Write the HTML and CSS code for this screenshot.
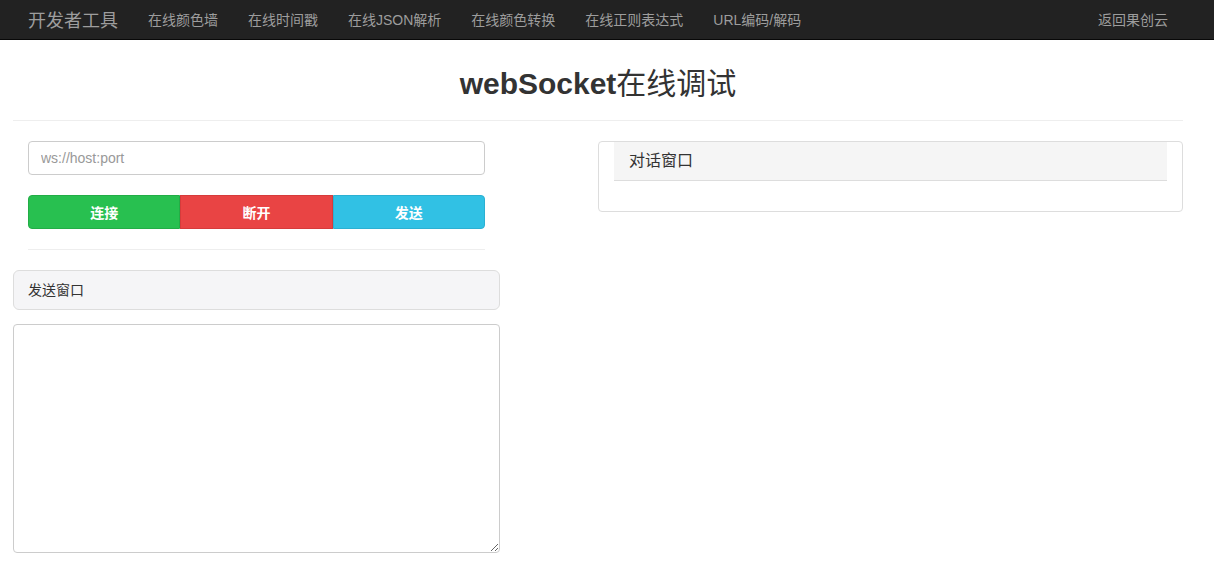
FILE: index.html
```html
<!DOCTYPE html>
<html lang="zh-CN">

<head>
    <meta charset="UTF-8">
    <title>webSocket在线调试</title>
    <link rel="stylesheet" href="styles.css">
</head>

<body>
    <nav class="navbar">
        <div class="nav-inner">
            <a class="brand" href="#">开发者工具</a>
            <ul class="nav-links">
                <li><a href="#">在线颜色墙</a></li>
                <li><a href="#">在线时间戳</a></li>
                <li><a href="#">在线JSON解析</a></li>
                <li><a href="#">在线颜色转换</a></li>
                <li><a href="#">在线正则表达式</a></li>
                <li><a href="#">URL编码/解码</a></li>
            </ul>
            <a class="nav-right" href="#">返回果创云</a>
        </div>
    </nav>

    <div class="container">
        <h1 class="title">webSocket<span class="title-cn">在线调试</span></h1>
        <hr class="line">

        <div class="row">
            <div class="col-left">
                <div class="inner">
                    <input type="text" class="url-input" placeholder="ws://host:port">
                    <div class="btn-group">
                        <button class="btn btn-connect">连接</button>
                        <button class="btn btn-close">断开</button>
                        <button class="btn btn-send">发送</button>
                    </div>
                    <hr class="line small">
                </div>
                <div class="send-head">发送窗口</div>
                <textarea class="send-text"></textarea>
            </div>

            <div class="col-right">
                <div class="panel">
                    <div class="panel-head">对话窗口</div>
                    <div class="panel-body"></div>
                </div>
            </div>
        </div>
    </div>
</body>

</html>
```

FILE: styles.css
```css
body {
    margin: 0;
    font-family: "Liberation Sans", "Noto Sans CJK SC", sans-serif;
    font-size: 14px;
    color: #333;
    background: #fff;
}

.navbar {
    height: 39px;
    background-color: #222;
    border-bottom: 1px solid #080808;
}

.nav-inner {
    width: 1170px;
    margin-left: 13px;
    display: flex;
    align-items: center;
    height: 37px;
}

.brand {
    padding: 0 15px;
    font-size: 18px;
    color: #9d9d9d;
    text-decoration: none;
}

.nav-links {
    display: flex;
    list-style: none;
    margin: 0;
    padding: 0;
}

.nav-links a,
.nav-right {
    display: block;
    padding: 0 15px;
    color: #9d9d9d;
    text-decoration: none;
    font-size: 14px;
}

.nav-right {
    margin-left: auto;
}

.container {
    width: 1170px;
    margin-left: 13px;
}

.title {
    margin: 24px 0 16px;
    line-height: 40px;
    font-size: 30px;
    font-weight: bold;
    text-align: center;
    color: #333;
}

.title-cn {
    font-weight: normal;
}

.line {
    margin: 0;
    border: 0;
    border-top: 1px solid #eee;
}

.line.small {
    margin-top: 20px;
}

.row {
    display: flex;
    justify-content: space-between;
}

.col-left {
    width: 487px;
}

.col-right {
    width: 585px;
    padding-top: 20px;
}

.inner {
    padding: 20px 15px 0;
}

.url-input {
    box-sizing: border-box;
    display: block;
    width: 100%;
    height: 34px;
    padding: 6px 12px;
    border: 1px solid #ccc;
    border-radius: 4px;
    font-family: inherit;
    font-size: 14px;
    color: #555;
}

.url-input::placeholder {
    color: #999;
}

.btn-group {
    display: flex;
    margin-top: 20px;
}

.btn {
    flex: 1;
    height: 34px;
    border: 1px solid transparent;
    color: #fff;
    font-family: inherit;
    font-size: 14px;
    font-weight: 600;
}

.btn-connect {
    background-color: #28c050;
    border-color: #22ad46;
    border-radius: 4px 0 0 4px;
}

.btn-close {
    background-color: #e94444;
    border-color: #d63b3b;
}

.btn-send {
    background-color: #31c1e4;
    border-color: #2bb0d2;
    border-radius: 0 4px 4px 0;
}

.send-head {
    margin-top: 20px;
    height: 38px;
    line-height: 38px;
    padding: 0 14px;
    background-color: #f5f5f7;
    border: 1px solid #ddd;
    border-radius: 6px;
}

.send-text {
    box-sizing: border-box;
    display: block;
    width: 100%;
    height: 229px;
    margin-top: 14px;
    border: 1px solid #ccc;
    border-radius: 4px;
    font-family: inherit;
}

.panel {
    border: 1px solid #ddd;
    border-radius: 4px;
    padding: 0 15px;
}

.panel-head {
    height: 38px;
    line-height: 38px;
    padding: 0 15px;
    font-size: 16px;
    background-color: #f5f5f5;
    border-bottom: 1px solid #ddd;
}

.panel-body {
    height: 30px;
}
```
